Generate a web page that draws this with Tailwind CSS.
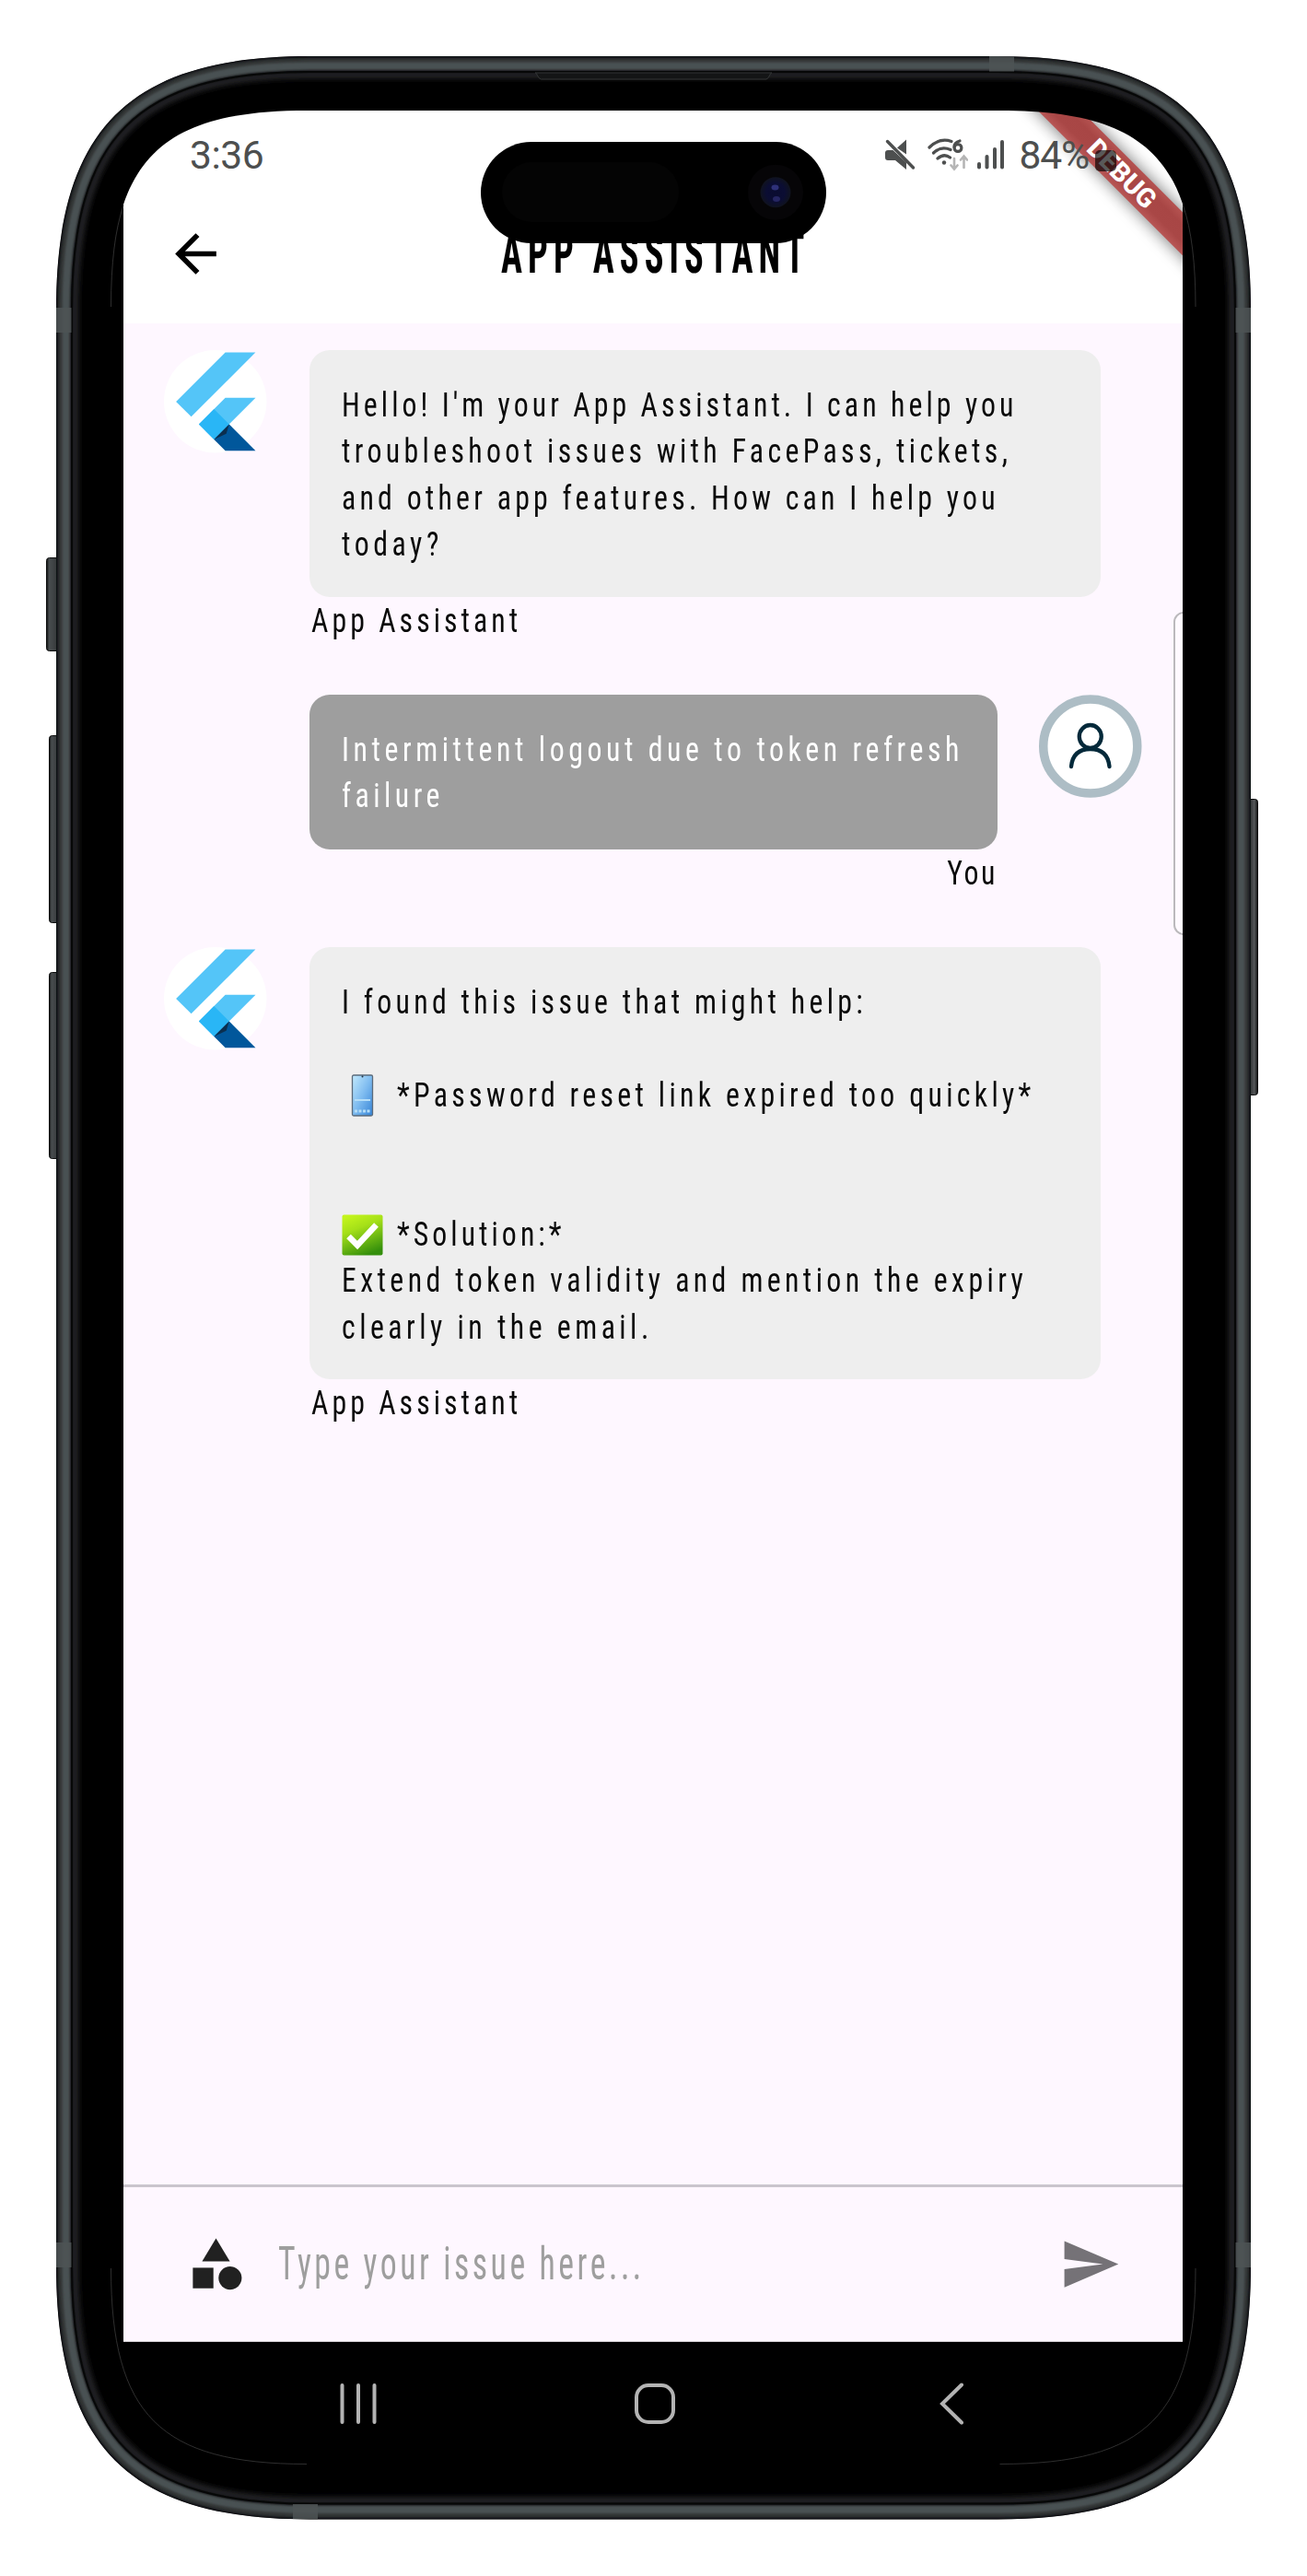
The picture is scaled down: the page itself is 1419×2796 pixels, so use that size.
<!DOCTYPE html>
<html lang="en">
<head>
<meta charset="utf-8">
<title>App Assistant</title>
<script src="https://cdn.jsdelivr.net/npm/@tailwindcss/browser@4"></script>
</head>
<body class="bg-white">
<svg width="0" height="0" class="absolute">
  <defs>
    <g id="flutter">
      <circle cx="55.75" cy="55.75" r="55.75" fill="#fff"/>
      <g transform="translate(2.9 2.5) scale(4.45)">
        <path d="M14.314 0L2.3 12 6 15.7 21.684.013z" fill="#54c5f8"/>
        <path d="M14.328 11.072L7.857 17.53l3.7 3.7 10.15-10.158z" fill="#54c5f8"/>
        <path d="M11.56 13.83L7.857 17.53l3.7 3.7 3.7-3.7z" fill="#29b6f6"/>
        <path d="M11.557 21.23L14.328 24H21.7l-6.44-6.47z" fill="#01579b"/>
        <path d="M11.557 21.23l3.7-3.7-.7 2.3z" fill="#0b2f4f"/>
      </g>
    </g>
  </defs>
</svg>

<main class="relative flex h-[2796px] w-[1419px] flex-col overflow-hidden bg-white pt-[120px] font-['Roboto',sans-serif]">
  <div class="mx-[120px] flex h-[2555px] flex-col rounded-[100px] bg-black px-[14px]">

    <!-- App screen -->
    <div class="relative flex h-[2422px] w-[1150px] flex-col overflow-hidden rounded-t-[20px] bg-[#fef7ff]">

      <header class="relative h-[231px] bg-white">
        <!-- Debug ribbon -->
        <svg class="absolute top-0 right-0" width="200" height="231" viewBox="0 0 200 231">
          <defs>
            <filter id="soft" x="-20%" y="-150%" width="140%" height="400%"><feGaussianBlur stdDeviation="9"/></filter>
            <linearGradient id="ribbon" x1="0" y1="0" x2="0" y2="1">
              <stop offset="0" stop-color="#b55351"/><stop offset=".3" stop-color="#a84645"/><stop offset=".7" stop-color="#a94746"/><stop offset="1" stop-color="#b85655"/>
            </linearGradient>
          </defs>
          <g transform="translate(134 67.8) rotate(45)">
            <rect x="-250" y="-16.6" width="500" height="33.2" fill="#000" opacity=".55" filter="url(#soft)"/>
            <rect x="-250" y="-16.6" width="500" height="33.2" fill="url(#ribbon)"/>
            <text x="0.500" y="10.500" text-anchor="middle" font-family="Roboto, sans-serif" font-size="29" font-weight="800" fill="#fff">DEBUG</text>
          </g>
        </svg>

        <div class="relative flex h-24 items-center pl-[72px] pr-[72px] text-[#4d4f4f]">
          <span class="text-[42.6px] leading-none font-[370] tracking-[-0.5px]">3:36</span>
          <div class="ml-auto flex items-center">
            <svg width="34" height="34" viewBox="0 0 34 34" fill="currentColor">
              <path d="M24 .5v16L14 9.500z"/>
              <path d="M1 15q0-3 3-3H9.500L24 25.500V33L12 23H4Q1 23 1 20z"/>
              <path d="M3.500 2.500L31.500 31" stroke="currentColor" stroke-width="3.400" stroke-linecap="round"/>
            </svg>
            <svg class="ml-[13px]" width="44" height="36" viewBox="0 0 44 36" fill="none" stroke="currentColor" stroke-width="3.200" stroke-linecap="round">
              <path d="M2 10Q13 -1 26 3.500"/>
              <path d="M6.500 16Q14.500 8 25 12.500"/>
              <path d="M11 22Q18 16 24.500 21"/>
              <circle cx="18" cy="26.500" r="2.200" fill="currentColor" stroke="none"/>
              <path d="M35 3Q29 4.500 29 9.500"/>
              <circle cx="33" cy="10.500" r="3.900"/>
              <path d="M29 22v11M25.500 29.500L29 33.500l3.500-4M39.500 32V20M36 23.500L39.500 19.500l3.500 4" stroke="#b5b5b5" stroke-width="2.600"/>
            </svg>
            <svg class="ml-[9px]" width="31" height="32" viewBox="0 0 31 32" fill="currentColor">
              <rect x="1" y="24" width="4" height="7.500" rx="2"/><rect x="9.500" y="16" width="4" height="15.500" rx="2"/><rect x="18" y="8" width="4" height="23.500" rx="2"/><rect x="26" y="0" width="4" height="31.500" rx="2"/>
            </svg>
            <span class="ml-[16px] text-[42.6px] leading-none font-[370] tracking-[-1.2px]">84%</span>
            <span class="mt-[13px] ml-[7px] block h-[23px] w-[23px] rounded-[5px] bg-black/65"></span>
          </div>
        </div>

        <div class="relative flex h-[118px] items-center">
          <svg class="ml-[45px]" width="67" height="67" viewBox="0 0 24 24" fill="#000"><path d="M7.825 13 13.425 18.600 12 20l-8-8 8-8 1.425 1.400L7.825 11H20v2z"/></svg>
          <h1 class="ml-[298px] origin-left scale-x-[.62] text-[62px] leading-none font-bold tracking-[9.800px] whitespace-nowrap text-black font-['Roboto_Condensed','Roboto',sans-serif]">APP ASSISTANT</h1>
        </div>
      </header>

      <section class="flex flex-1 flex-col gap-[54.600px] pt-[29px] pl-[44px] text-[37px] leading-[50.4px] whitespace-nowrap text-[#0a0a0a] font-['Roboto_Condensed','Roboto',sans-serif]">
        <article class="flex items-start gap-[46px]">
          <svg width="111.500" height="111.500" viewBox="0 0 111.5 111.5"><use href="#flutter"/></svg>
          <div>
            <div class="h-[268px] w-[859px] rounded-[22px] bg-[#eee] pt-[35px] pl-[35.500px]">
              <p class="origin-left scale-x-[.86] tracking-[4.73px]">Hello! I'm your App Assistant. I can help you</p>
              <p class="origin-left scale-x-[.86] tracking-[5.05px]">troubleshoot issues with FacePass, tickets,</p>
              <p class="origin-left scale-x-[.86] tracking-[4.92px]">and other app features. How can I help you</p>
              <p class="origin-left scale-x-[.86] tracking-[5.3px]">today?</p>
            </div>
            <p class="mt-px ml-[2px] origin-left scale-x-[.86] tracking-[4.7px]">App Assistant</p>
          </div>
        </article>

        <article class="flex items-start pl-[157.500px]">
          <div class="w-[747px]">
            <div class="h-[168px] rounded-[22px] bg-[#9e9e9e] pt-[35px] pl-[35.500px] text-white">
              <p class="origin-left scale-x-[.86] tracking-[5.3px]">Intermittent logout due to token refresh</p>
              <p class="origin-left scale-x-[.86] tracking-[5.2px]">failure</p>
            </div>
            <p class="mt-px origin-right scale-x-[.86] text-right tracking-[3.000px]">You</p>
          </div>
          <svg class="ml-[45.500px]" width="111.500" height="112" viewBox="0 0 111.5 112" fill="none">
            <circle cx="55.750" cy="56" r="51" fill="#fff" stroke="#adbdc5" stroke-width="9.500"/>
            <g stroke="#04293a" stroke-width="4.300" stroke-linecap="round">
              <ellipse cx="55.750" cy="45.500" rx="12" ry="12.500"/>
              <path d="M35 78Q37 59 55.750 59T76.500 78"/>
            </g>
          </svg>
        </article>

        <article class="flex items-start gap-[46px]">
          <svg width="111.500" height="111.500" viewBox="0 0 111.5 111.5"><use href="#flutter"/></svg>
          <div>
            <div class="h-[468.500px] w-[859px] rounded-[22px] bg-[#eee] pt-[35px] pl-[35.500px]">
              <p class="origin-left scale-x-[.86] tracking-[5px]">I found this issue that might help:</p>
              <p class="h-[50.4px]"></p>
              <div class="flex h-[50.4px] items-center">
                <svg class="mr-[15px] shrink-0" width="45" height="46" viewBox="0 0 45 46">
                  <defs><linearGradient id="phone" x1="0" y1="0" x2="1" y2="1"><stop offset="0" stop-color="#c3eafd"/><stop offset=".5" stop-color="#7fbcf0"/><stop offset="1" stop-color="#3483d6"/></linearGradient></defs>
                  <rect x="11.500" y="1" width="22" height="44" rx="1.500" fill="url(#phone)" stroke="#5b6b7b" stroke-width="1.300"/>
                  <circle cx="22.500" cy="2.500" r="1" fill="#234"/>
                  <path d="M14 28h17" stroke="#b5def8" stroke-width="2"/>
                  <path d="M14 40h3m1.500 0h3m1.500 0h3m1.500 0h3" stroke="#b5def8" stroke-width="3"/>
                </svg>
                <p class="origin-left scale-x-[.86] tracking-[5px]">*Password reset link expired too quickly*</p>
              </div>
              <p class="h-[100.8px]"></p>
              <div class="flex h-[50.4px] items-center">
                <svg class="mr-[15px] shrink-0" width="45" height="45" viewBox="0 0 45 45">
                  <defs><linearGradient id="ok" x1=".2" y1="0" x2=".6" y2="1"><stop offset="0" stop-color="#c4f51c"/><stop offset=".35" stop-color="#a5e018"/><stop offset="1" stop-color="#348f0c"/></linearGradient></defs>
                  <rect x=".500" y=".500" width="44" height="44" rx="2" fill="url(#ok)"/>
                  <path d="M7.500 24L17 33.500 37.500 11.500" fill="none" stroke="#fff" stroke-width="6.500"/>
                </svg>
                <p class="origin-left scale-x-[.86] tracking-[4.7px]">*Solution:*</p>
              </div>
              <p class="origin-left scale-x-[.86] tracking-[5.1px]">Extend token validity and mention the expiry</p>
              <p class="origin-left scale-x-[.86] tracking-[5.2px]">clearly in the email.</p>
            </div>
            <p class="mt-px ml-[2px] origin-left scale-x-[.86] tracking-[4.7px]">App Assistant</p>
          </div>
        </article>
      </section>

      <footer class="flex h-[171px] items-center border-t-[3px] border-b border-t-[#cac5cd] border-b-[#cfcacf] px-[67px]">
        <svg width="67" height="67" viewBox="0 0 24 24" fill="#212121"><path d="M12 2l-5.400 8.900h10.800z"/><circle cx="17.500" cy="17.400" r="4.500"/><path d="M3 13.400h8v8H3z"/></svg>
        <span class="ml-[34px] origin-left scale-x-[.72] text-[49.7px] leading-none tracking-[4.900px] whitespace-nowrap text-[#9e9e9e] font-['Roboto_Condensed','Roboto',sans-serif]">Type your issue here...</span>
        <svg class="ml-auto" width="67" height="67" viewBox="0 0 24 24" fill="#757277"><path d="M2.010 21L23 12 2.010 3 2 10l15 2-15 2z"/></svg>
      </footer>

      <!-- Edge panel handle -->
      <div class="absolute top-[544px] -right-[14px] h-[351px] w-[24px] rounded-[11px] border-[2.500px] border-[#bbb9bc] bg-[#fffaff]"></div>
    </div>

    <!-- System navigation -->
    <nav class="ml-[94px] grid h-[133px] w-[966px] grid-cols-3 place-items-center text-[#b3b3b3]">
      <svg width="42" height="44" viewBox="0 0 42 44" stroke="currentColor" stroke-width="4" stroke-linecap="round"><path d="M3.500 2v40M21 2v40M38.500 2v40"/></svg>
      <svg width="44" height="44" viewBox="0 0 44 44" fill="none" stroke="currentColor" stroke-width="4"><rect x="2" y="2" width="40" height="40" rx="13"/></svg>
      <svg width="26" height="46" viewBox="0 0 26 46" fill="none" stroke="currentColor" stroke-width="4" stroke-linecap="round"><path d="M24 2.500L3 23l21 20.500"/></svg>
    </nav>
  </div>

  <!-- Phone body drawn over the screen edges -->
  <svg class="pointer-events-none absolute inset-0" width="1419" height="2796" viewBox="0 0 1419 2796" fill="none">
    <defs>
      <filter id="glow" x="-5%" y="-5%" width="110%" height="110%"><feGaussianBlur stdDeviation="3"/></filter>
      <filter id="blend" x="-2%" y="-2%" width="104%" height="104%"><feGaussianBlur stdDeviation="1.200"/></filter>
      <linearGradient id="keyL" x1="0" x2="1" y1="0" y2="0"><stop offset="0" stop-color="#0c0d0d"/><stop offset=".2" stop-color="#484d4f"/><stop offset=".7" stop-color="#3a3d3f"/><stop offset="1" stop-color="#1a1b1c"/></linearGradient>
      <linearGradient id="keyR" x1="1" x2="0" y1="0" y2="0"><stop offset="0" stop-color="#0c0d0d"/><stop offset=".3" stop-color="#55585a"/><stop offset=".7" stop-color="#303233"/><stop offset="1" stop-color="#141515"/></linearGradient>
      <radialGradient id="lens"><stop offset="0" stop-color="#0a0c30"/><stop offset=".6" stop-color="#0b0d33"/><stop offset="1" stop-color="#10131f"/></radialGradient>
      <clipPath id="body"><path d="M61 336C61 140 140 61 336 61H1083C1279 61 1358 140 1358 336V2459.500C1358 2655.500 1279 2734.500 1083 2734.500H336C140 2734.500 61 2655.500 61 2459.500z"/></clipPath>
    </defs>
    <g stroke="#0d0e0e" stroke-width="1">
      <rect x="50.500" y="605.500" width="14" height="101" rx="3" fill="url(#keyL)"/>
      <rect x="53.500" y="798.500" width="12" height="203" rx="3" fill="url(#keyL)"/>
      <rect x="53.500" y="1055.500" width="12" height="202" rx="3" fill="url(#keyL)"/>
      <rect x="1353.500" y="867.500" width="12" height="321" rx="3" fill="url(#keyR)"/>
    </g>
    <path fill="#000" fill-rule="evenodd" d="M61 336C61 140 140 61 336 61H1083C1279 61 1358 140 1358 336V2459.500C1358 2655.500 1279 2734.500 1083 2734.500H336C140 2734.500 61 2655.500 61 2459.500zM120 333C120 174 174 120 333 120H1085.500C1244.500 120 1298.500 174 1298.500 333V2462C1298.500 2621 1244.500 2675 1085.500 2675H333C174 2675 120 2621 120 2462z"/>
    <g clip-path="url(#body)">
      <path stroke="#2b2c2d" stroke-width="7" filter="url(#glow)" d="M81 336.500C81 151 151 81 336.500 81H1082.500C1268 81 1338 151 1338 336.500V2459C1338 2644.500 1268 2714.500 1082.500 2714.500H336.500C151 2714.500 81 2644.500 81 2459z"/>
      <g filter="url(#blend)">
        <use href="#rim" stroke="#17191a" stroke-width="17"/>
        <use href="#rim" stroke="#303536" stroke-width="12"/>
      </g>
      <path id="rim" d="M69.500 336C69.500 144.500 144.500 69.500 336 69.500H1083C1274.500 69.500 1349.500 144.500 1349.500 336V2459.500C1349.500 2651 1274.500 2726 1083 2726H336C144.500 2726 69.500 2651 69.500 2459.500z"/>
      <path stroke="#4a5153" stroke-width="8" filter="url(#blend)" d="M71.500 336C71.500 146 146 71.500 336 71.500H1083C1273 71.500 1347.500 146 1347.500 336V2459.500C1347.500 2649.500 1273 2724 1083 2724H336C146 2724 71.500 2649.500 71.500 2459.500z"/>
      <path stroke="#060707" stroke-width="2" d="M78 336C78 149 149 78 336 78H1083C1270 78 1341 149 1341 336V2459.500C1341 2646.500 1270 2717.500 1083 2717.500H336C149 2717.500 78 2646.500 78 2459.500z"/>
      <g fill="#4d5355" opacity=".85">
        <path d="M61 334h16.500v27H61zM1341.500 334H1358v27h-16.500zM61 2434h16.500v27H61zM1341.500 2434H1358v27h-16.500zM1074 61h27v16.500h-27zM318 2718h27v16.500h-27z"/>
      </g>
    </g>
    <path d="M581 79q1.500 0 2.500 3t4 4H832q2.500-1 3.500-4t2.500-3z" fill="#141516" stroke="#333536"/>
    <!-- Hairline around the display glass -->
    <g stroke="#444" stroke-width=".7">
      <path d="M134 223Q120.500 262 120.500 333M1284.500 223Q1298 262 1298 333M120.500 2462C120.500 2621 174 2674.500 333 2674.500M1298 2462C1298 2621 1244.500 2674.500 1085.500 2674.500"/>
    </g>
    <!-- Camera island -->
    <rect x="522" y="154" width="375" height="110" rx="55" fill="#000"/>
    <rect x="545" y="176" width="192" height="65" rx="32.500" fill="#040404"/>
    <circle cx="842" cy="208.700" r="30" fill="#060507"/>
    <circle cx="842" cy="208.700" r="16.500" fill="url(#lens)"/>
    <ellipse cx="841.500" cy="203.500" rx="4" ry="3" fill="#2e3078"/>
    <ellipse cx="843" cy="216" rx="4" ry="3" fill="#262662"/>
  </svg>
</main>
</body>
</html>
